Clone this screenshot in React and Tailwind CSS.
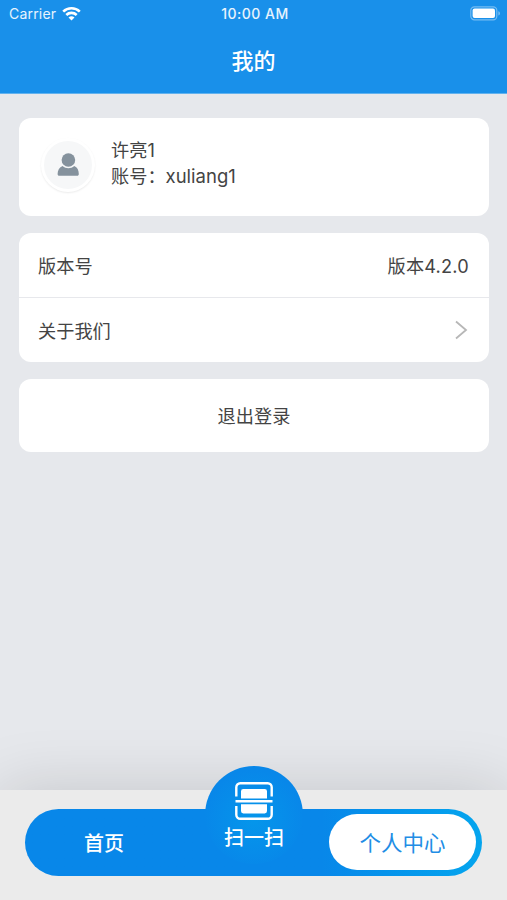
const menuItems = [
  { label: "版本号", value: "版本4.2.0" },
  { label: "关于我们", link: true },
]

function WifiIcon() {
  return (
    <svg width="19" height="15" viewBox="0 0 19 15" fill="none" stroke="white" strokeWidth="2.6" className="-mt-[2px]">
      <path d="M1.2 5.6a12 12 0 0 1 16.6 0" />
      <path d="M4.3 9a7.5 7.5 0 0 1 10.4 0" />
      <path d="M9.5 14.6 6.5 11.6a4.3 4.3 0 0 1 6 0z" fill="white" stroke="none" />
    </svg>
  )
}

function BatteryIcon() {
  return (
    <svg width="31" height="15" viewBox="0 0 31 15" className="-mt-[2px]">
      <rect x="0.8" y="0.8" width="26" height="13" rx="3.6" fill="none" stroke="white" strokeOpacity="0.4" strokeWidth="1.2" />
      <rect x="2.6" y="2.6" width="22.4" height="9.4" rx="2" fill="white" />
      <path d="M28.4 5.2v4.4c.9-.4 1.5-1.2 1.5-2.2s-.6-1.8-1.5-2.2z" fill="white" fillOpacity="0.45" />
    </svg>
  )
}

function UserIcon() {
  return (
    <svg width="22" height="24" viewBox="0 0 22 24" fill="#85929d">
      <circle cx="11.4" cy="7" r="6.8" />
      <path d="M5.6 12.9c3.2 3 8.400 3 11.600 0 3.200 1.300 4.600 4.300 4.600 8.100 0 1.200-.6 1.800-1.600 1.800H2.200C1.200 22.800.6 22.200.6 21c0-3.800 1.800-6.800 5-8.100z" />
    </svg>
  )
}

function ScanIcon() {
  return (
    <svg width="38" height="38" viewBox="0 0 38 38" fill="none" stroke="white" strokeWidth="2.4">
      <path d="M1.3 14.5V5.3a4 4 0 0 1 4-4h27.4a4 4 0 0 1 4 4v9.2" />
      <path d="M1.3 24v8.7a4 4 0 0 0 4 4h27.4a4 4 0 0 0 4-4V24" />
      <path d="M0.5 19.3h37" />
      <path d="M6 16.5V9.300A2.300 2.300 0 0 1 8.300 7h21.400A2.300 2.300 0 0 1 32 9.300V16.500z" fill="white" stroke="none" />
      <path d="M6 22.300h26v6.800a2.300 2.300 0 0 1-2.300 2.300H8.300A2.300 2.300 0 0 1 6 29.100z" fill="white" stroke="none" />
    </svg>
  )
}

function Header() {
  return (
    <header className="h-[94px] border-b border-[#62b2ee] bg-[#1990ea] text-white">
      <div className="grid h-7 grid-cols-3 items-center pr-[6px] pl-[9px] leading-none">
        <div className="flex items-center gap-[6px]">
          <span className="text-[14px] tracking-[0.2px] text-white/90">Carrier</span>
          <WifiIcon />
        </div>
        <span className="text-center text-[14px] font-medium tracking-[0.5px] whitespace-nowrap text-white/90">10:00 AM</span>
        <div className="flex justify-end">
          <BatteryIcon />
        </div>
      </div>
      <h1 className="pt-4 text-center text-[22px] leading-[34px] font-medium">我的</h1>
    </header>
  )
}

function TabBar() {
  return (
    <footer className="h-[110px] bg-[#ebebeb] px-[25px] pt-[18.5px] shadow-[0_0_64px_rgba(0,0,0,0.15)]">
      <nav className="relative flex h-[67px] w-[457px] items-center rounded-full bg-linear-to-r from-[#0887e9] from-65% to-[#05a5ee]">
        <button className="w-[158px] pt-1 text-[20px] leading-7 font-medium text-white">首页</button>
        <button className="absolute -top-[43px] left-[180px] flex h-[98px] w-[98px] flex-col items-center rounded-full bg-[radial-gradient(circle_at_50%_55%,#0596eb_0%,#0887e9_50px)] pt-4 text-[20px] font-medium text-white">
          <ScanIcon />
          <span className="leading-9">扫一扫</span>
        </button>
        <button className="mr-[6px] ml-auto h-[56px] w-[147px] rounded-full bg-white pt-[2px] text-[21.5px] text-[#218de5]">
          个人中心
        </button>
      </nav>
    </footer>
  )
}

export default function App() {
  return (
    <div className="flex h-[900px] w-[507px] flex-col overflow-hidden bg-[#e6e8ec] font-[Inter,'Noto_Sans_CJK_SC',sans-serif] text-[18.2px] text-[#444]">
      <Header />
      <main className="flex flex-1 flex-col gap-[17px] pt-6 pr-[18px] pl-[19px]">
        <section className="flex h-[98px] items-start rounded-xl bg-white pt-5 pl-[22px]">
          <div className="flex h-[54px] w-[54px] items-center justify-center rounded-full border-3 border-white bg-[#f6f7f8] shadow-[0_1px_2px_rgba(0,0,0,0.08)]">
            <UserIcon />
          </div>
          <div className="-mt-px ml-4 leading-[26px]">
            <p>许亮1</p>
            <p className="-mt-[0.5px]">
              账号：<span className="text-[18.5px]">xuliang1</span>
            </p>
          </div>
        </section>
        <section className="h-[128.5px] divide-y divide-[#e7e8ec] rounded-xl bg-white">
          {menuItems.map((item) => (
            <div key={item.label} className="flex h-[64.5px] items-center justify-between pt-[3px] pr-5 pl-[19px]">
              <span>{item.label}</span>
              {item.value && <span className="tracking-[0.2px]">{item.value}</span>}
              {item.link && (
                <svg width="14" height="20" viewBox="0 0 14 20" fill="none" stroke="#b7b7b7" strokeWidth="1.8" className="-mt-[3px]">
                  <path d="m1 1.5 10 8.500-10 8.500" />
                </svg>
              )}
            </div>
          ))}
        </section>
        <button className="h-[73px] w-full rounded-xl bg-white pt-[3px]">退出登录</button>
      </main>
      <TabBar />
    </div>
  )
}
